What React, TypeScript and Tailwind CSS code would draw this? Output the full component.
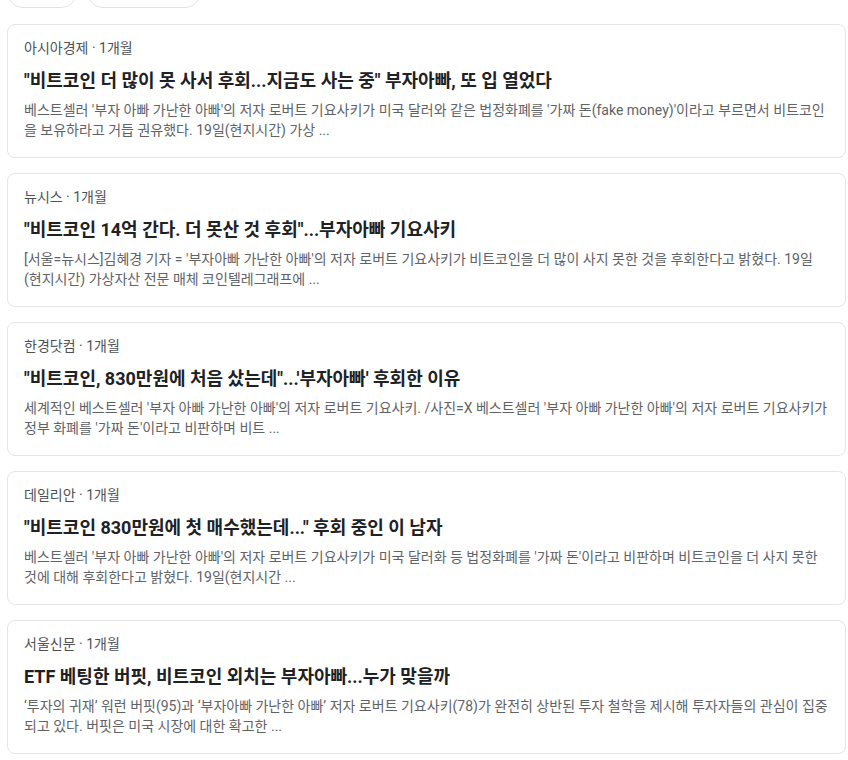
const articles = [
    {
        source: '아시아경제',
        time: '1개월',
        title: '"비트코인 더 많이 못 사서 후회...지금도 사는 중" 부자아빠, 또 입 열었다',
        snippet:
            "베스트셀러 '부자 아빠 가난한 아빠'의 저자 로버트 기요사키가 미국 달러와 같은 법정화폐를 '가짜 돈(fake money)'이라고 부르면서 비트코인을 보유하라고 거듭 권유했다. 19일(현지시간) 가상 ...",
    },
    {
        source: '뉴시스',
        time: '1개월',
        title: '"비트코인 14억 간다. 더 못산 것 후회"...부자아빠 기요사키',
        snippet:
            "[서울=뉴시스]김혜경 기자 = '부자아빠 가난한 아빠'의 저자 로버트 기요사키가 비트코인을 더 많이 사지 못한 것을 후회한다고 밝혔다. 19일(현지시간) 가상자산 전문 매체 코인텔레그래프에 ...",
    },
    {
        source: '한경닷컴',
        time: '1개월',
        title: "\"비트코인, 830만원에 처음 샀는데\"...'부자아빠' 후회한 이유",
        snippet:
            "세계적인 베스트셀러 '부자 아빠 가난한 아빠'의 저자 로버트 기요사키. /사진=X 베스트셀러 '부자 아빠 가난한 아빠'의 저자 로버트 기요사키가 정부 화폐를 '가짜 돈'이라고 비판하며 비트 ...",
    },
    {
        source: '데일리안',
        time: '1개월',
        title: '"비트코인 830만원에 첫 매수했는데..." 후회 중인 이 남자',
        snippet:
            "베스트셀러 '부자 아빠 가난한 아빠'의 저자 로버트 기요사키가 미국 달러화 등 법정화폐를 '가짜 돈'이라고 비판하며 비트코인을 더 사지 못한 것에 대해 후회한다고 밝혔다. 19일(현지시간 ...",
    },
    {
        source: '서울신문',
        time: '1개월',
        title: 'ETF 베팅한 버핏, 비트코인 외치는 부자아빠...누가 맞을까',
        snippet:
            '‘투자의 귀재’ 워런 버핏(95)과 ‘부자아빠 가난한 아빠’ 저자 로버트 기요사키(78)가 완전히 상반된 투자 철학을 제시해 투자자들의 관심이 집중되고 있다. 버핏은 미국 시장에 대한 확고한 ...',
    },
];

export default function App() {
    return (
        <div
            className="min-h-[760px] overflow-hidden bg-white pl-[7px] pr-[2px]"
            style={{ fontFamily: "Roboto, 'Noto Sans CJK KR', sans-serif" }}
        >
            <div className="-mt-[24px] flex gap-[10px]">
                <div className="h-8 w-[70px] rounded-full border border-[#e3e3e3] bg-white" />
                <div className="h-8 w-[114px] rounded-full border border-[#e3e3e3] bg-white" />
            </div>

            <div className="mt-4 space-y-[15px]">
                {articles.map(article => (
                    <div
                        key={article.title}
                        className="rounded-lg border border-[#e5e5e5] bg-white px-4 pb-[17px] pt-[13px]"
                    >
                        <p className="text-sm leading-5 text-[#4d5156]">
                            {article.source} · {article.time}
                        </p>
                        <p className="mt-[10px] text-lg font-bold leading-[26px] text-[#202124]">
                            {article.title}
                        </p>
                        <p className="mt-[6px] text-sm leading-5 text-[#5f6368]">
                            {article.snippet}
                        </p>
                    </div>
                ))}
            </div>
        </div>
    );
}
